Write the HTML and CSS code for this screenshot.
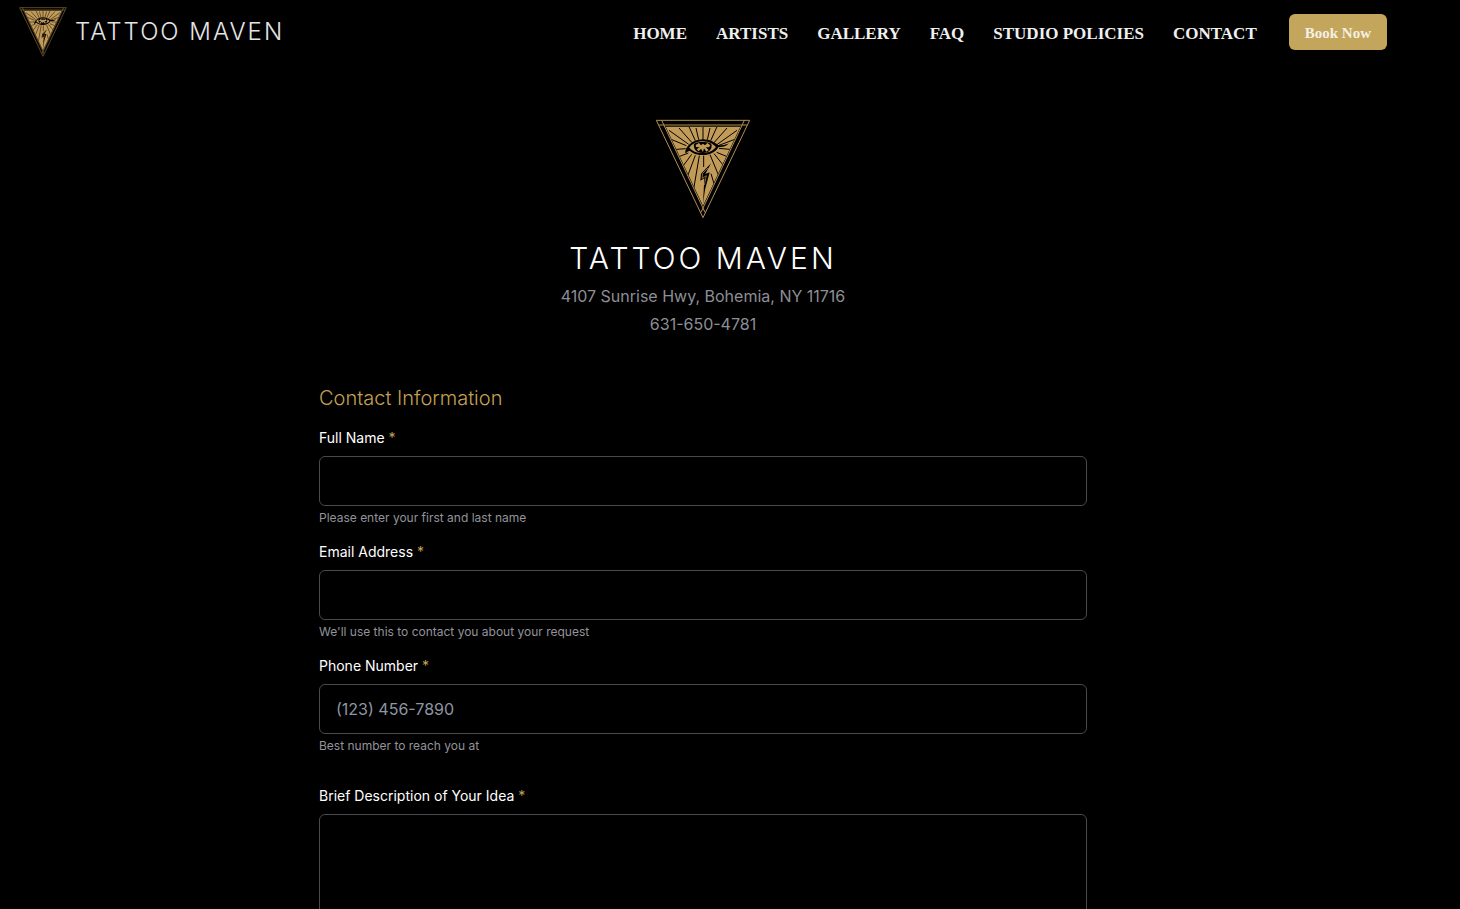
FILE: index.html
```html
<!DOCTYPE html>
<html lang="en">
<head>
<meta charset="utf-8">
<meta name="viewport" content="width=device-width, initial-scale=1">
<title>Tattoo Maven</title>
<link rel="stylesheet" href="styles.css">
</head>
<body>
<svg class="sprite" aria-hidden="true">
  <defs>
    <clipPath id="face"><path d="M48 51H272L160 288Z"/></clipPath>
  </defs>
  <symbol id="emblem" viewBox="18 28 284 300">
    <path d="M48 51H272L160 288Z" fill="#c29b59"/>
    <g clip-path="url(#face)" stroke="#000" stroke-width="3" fill="none">
      <path d="M160 51V92M139 55L147 90M181 55L173 90M118 51L137 93M202 51L183 93M88 55L127 99M232 55L193 99M58 62L117 104M262 62L203 104M62 88L110 108M258 88L208 107"/>
      <path d="M70 120L108 117M250 120L208 116M80 144L116 130M240 144L201 128M98 172L126 134M222 168L193 132M112 204L137 137M208 200L181 135M132 238L149 138M196 232L184 192"/>
    </g>
    <path d="M107 131C104 116 124 90 160 89C180 89 195 98 206 106C220 108 230 105 238 101C230 111 217 113 207 112C195 130 178 137 156 136C138 135 128 130 120 123C115 124 112 128 107 131Z" fill="#000"/>
    <path d="M119 114C130 99 145 95 160 95C178 95 191 104 199 112C187 126 174 130 157 130C140 130 128 124 119 114Z" fill="#c29b59"/>
    <path d="M133 103C142 95 176 95 185 103C189 116 180 130 159 130C140 130 130 117 133 103Z" fill="#000"/>
    <path d="M138 106L148 100L154 107L160 102L166 107L173 100L182 107L178 113L168 113L177 121L170 126L163 116L160 127L154 117L147 125L141 119L150 113L139 112Z" fill="#c29b59"/>
    <path d="M162 138V172" stroke="#000" stroke-width="3"/>
    <path d="M184 161L154 192L152 213L164 206L160 282L166 240L180 188L167 193Z" fill="#000"/>
    <path d="M175 175L159 191L157 206L170 198L164 226" fill="none" stroke="#c29b59" stroke-width="2"/>
    <path d="M20 32H300L160 324Z M36 32L166 308M284 32L154 308M28 46H292" fill="none" stroke="#b38f53" stroke-width="3"/>
  </symbol>
</svg>

<header class="site-header">
  <a class="brand" href="#">
    <svg class="brand-mark" aria-hidden="true"><use href="#emblem"/></svg>
    <span>TATTOO MAVEN</span>
  </a>
  <nav class="nav">
    <a href="#">HOME</a>
    <a href="#">ARTISTS</a>
    <a href="#">GALLERY</a>
    <a href="#">FAQ</a>
    <a href="#">STUDIO POLICIES</a>
    <a href="#">CONTACT</a>
  </nav>
  <button class="book" type="button">Book Now</button>
</header>

<main class="page">
  <section class="hero">
    <svg class="hero-mark" role="img" aria-label="Tattoo Maven emblem"><use href="#emblem"/></svg>
    <h1>TATTOO MAVEN</h1>
    <p>4107 Sunrise Hwy, Bohemia, NY 11716</p>
    <p>631-650-4781</p>
  </section>

  <form class="form">
    <section class="group">
      <h2>Contact Information</h2>
      <div class="field">
        <label for="name">Full Name <span class="req">*</span></label>
        <input id="name" type="text" aria-describedby="name-help">
        <p id="name-help">Please enter your first and last name</p>
      </div>
      <div class="field">
        <label for="email">Email Address <span class="req">*</span></label>
        <input id="email" type="email" aria-describedby="email-help">
        <p id="email-help">We'll use this to contact you about your request</p>
      </div>
      <div class="field">
        <label for="phone">Phone Number <span class="req">*</span></label>
        <input id="phone" type="tel" placeholder="(123) 456-7890" aria-describedby="phone-help">
        <p id="phone-help">Best number to reach you at</p>
      </div>
    </section>
    <div class="field">
      <label for="idea">Brief Description of Your Idea <span class="req">*</span></label>
      <textarea id="idea" rows="5"></textarea>
    </div>
  </form>
</main>
</body>
</html>
```
FILE: styles.css
```css
* {
  box-sizing: border-box;
  margin: 0;
}

body {
  min-height: 100vh;
  padding-right: 54px;
  background: #000;
  color: #fff;
  font-family: Inter, "Liberation Sans", sans-serif;
  font-size: 16px;
}

.sprite {
  position: absolute;
  width: 0;
  height: 0;
}

.site-header {
  display: flex;
  align-items: center;
  height: 64px;
  padding: 0 19px;
}

.brand {
  display: flex;
  align-items: center;
  gap: 8px;
  margin-right: auto;
  color: #e5e5e5;
  font-size: 24px;
  font-weight: 300;
  line-height: 32px;
  letter-spacing: 2px;
  text-decoration: none;
  white-space: nowrap;
}

.brand-mark {
  width: 48px;
  height: 50px;
}

.nav {
  display: flex;
  gap: 29px;
  margin-right: 32px;
  padding-top: 3px;
  font-family: "Liberation Serif", serif;
  font-size: 17px;
  font-weight: 700;
  line-height: 24px;
  white-space: nowrap;
}

.nav a {
  color: #f0f0f0;
  text-decoration: none;
}

.book {
  height: 36px;
  padding: 2px 16px 0;
  border: 0;
  border-radius: 6px;
  background: #c4a55c;
  color: #f5f0e4;
  font-family: "Liberation Serif", serif;
  font-size: 15px;
  font-weight: 700;
  white-space: nowrap;
}

.page {
  max-width: 800px;
  margin: 0 auto;
  padding: 55px 16px 48px;
}

.hero {
  display: flex;
  flex-direction: column;
  align-items: center;
  margin-bottom: 46px;
  color: #8e8e96;
  line-height: 28px;
  text-align: center;
}

.hero-mark {
  width: 96px;
  height: 100px;
  margin-bottom: 21px;
}

.hero h1 {
  margin-bottom: 6px;
  color: #fff;
  font-size: 30px;
  font-weight: 300;
  line-height: 36px;
  letter-spacing: 0.1em;
}

.form {
  display: flex;
  flex-direction: column;
  gap: 32px;
}

.group {
  display: flex;
  flex-direction: column;
  gap: 16px;
}

.group h2 {
  color: #c4a055;
  font-size: 20px;
  font-weight: 300;
  line-height: 28px;
}

.field {
  display: flex;
  flex-direction: column;
}

.field label {
  margin-bottom: 8px;
  font-size: 14px;
  line-height: 20px;
}

.req {
  color: #c4a055;
}

.field input,
.field textarea {
  width: 100%;
  padding: 12px 16px;
  border: 1px solid #4a4a4e;
  border-radius: 6px;
  background: transparent;
  color: #fff;
  font: inherit;
  line-height: 24px;
  resize: none;
}

.field input {
  height: 50px;
}

.field input::placeholder {
  color: #8f96a3;
}

.field p {
  margin-top: 4px;
  color: #93939b;
  font-size: 12px;
  line-height: 16px;
}
```
